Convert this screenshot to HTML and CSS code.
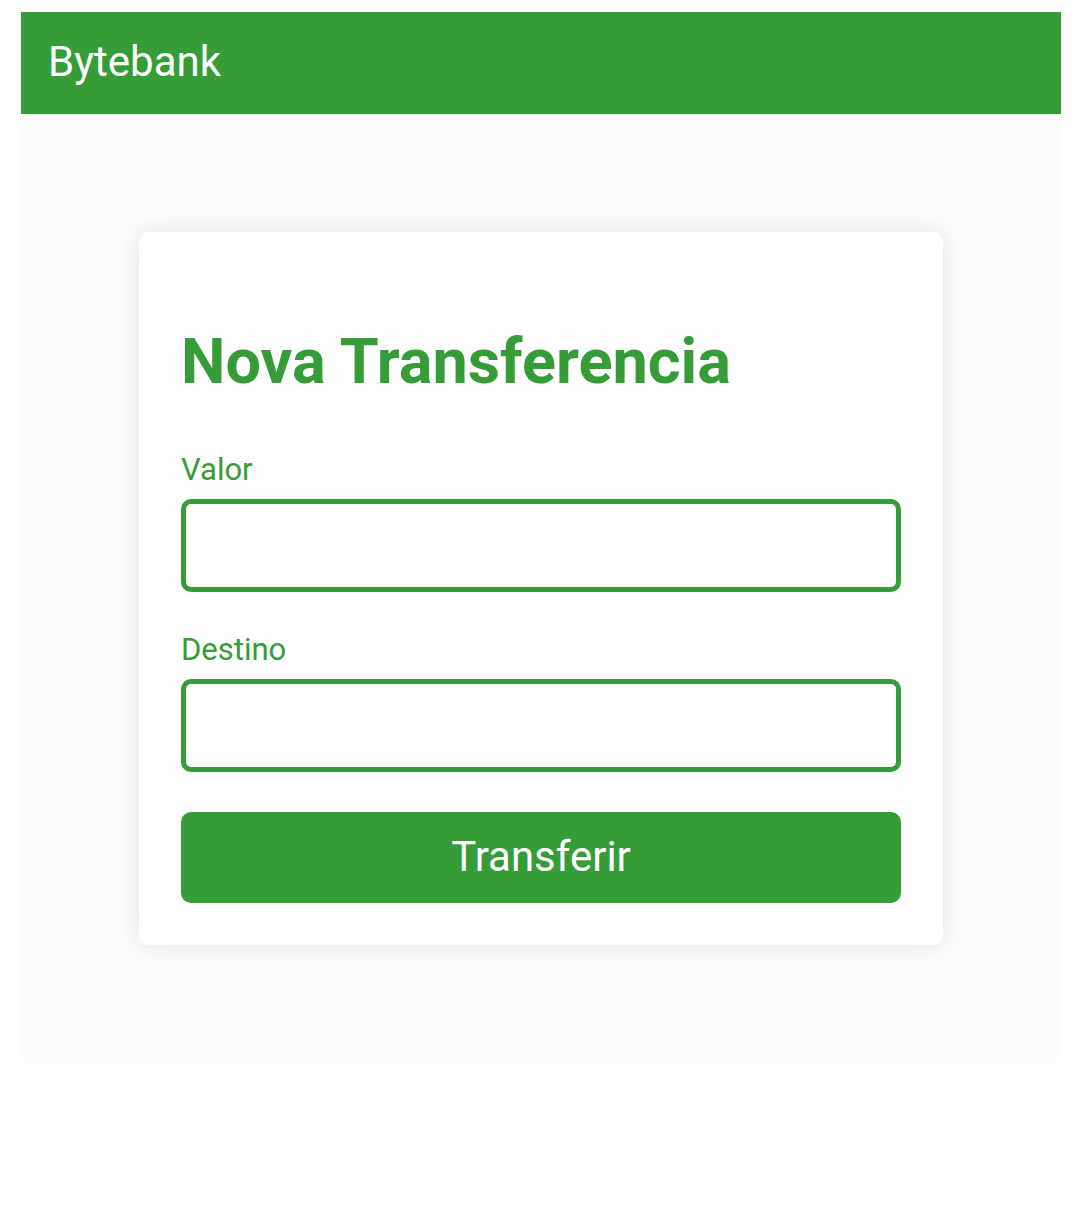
FILE: index.html
```html
<!DOCTYPE html>
<html lang="pt-BR">
<head>
  <meta charset="utf-8">
  <meta name="viewport" content="width=device-width, initial-scale=1">
  <title>Bytebank</title>
  <link rel="stylesheet" href="styles.css">
</head>
<body>
  <div class="app">
    <header class="header">Bytebank</header>
    <main class="content">
      <form class="card">
        <h1 class="title">Nova Transferencia</h1>
        <div class="field">
          <label for="valor">Valor</label>
          <input id="valor" type="text" inputmode="decimal">
        </div>
        <div class="field">
          <label for="destino">Destino</label>
          <input id="destino" type="text">
        </div>
        <button class="submit" type="button">Transferir</button>
      </form>
    </main>
  </div>
</body>
</html>
```

FILE: styles.css
```css
* {
  box-sizing: border-box;
}

body {
  margin: 0;
  padding: 12px 19px 0 21px;
  background: #fefefe;
  font-family: Roboto, "Liberation Sans", sans-serif;
}

.app {
  background: #fcfcfc;
}

.header {
  padding: 25px 27px 27px;
  background: #369c37;
  color: #fff;
  font-size: 42px;
  line-height: 50px;
}

.content {
  padding: 118px;
}

.card {
  padding: 95px 42px 42px;
  border-radius: 10px;
  background: #fefefe;
  box-shadow: 0 0 26px rgba(0, 0, 0, 0.1);
}

.title {
  margin: 0 0 55px;
  color: #369c37;
  font-size: 63px;
  line-height: 70px;
  font-weight: 700;
}

.field {
  display: flex;
  flex-direction: column;
  gap: 11px;
  margin-bottom: 40px;
}

.field label {
  color: #369c37;
  font-size: 31px;
  line-height: 36px;
}

.field input {
  width: 100%;
  height: 93px;
  padding: 0 16px;
  border: 5px solid #369c37;
  border-radius: 10px;
  background: #fff;
  font: inherit;
  font-size: 31px;
}

.submit {
  display: block;
  width: 100%;
  height: 91px;
  padding: 0 0 2px;
  border: 0;
  border-radius: 10px;
  background: #369c37;
  color: #fff;
  font: inherit;
  font-size: 42px;
}
```
